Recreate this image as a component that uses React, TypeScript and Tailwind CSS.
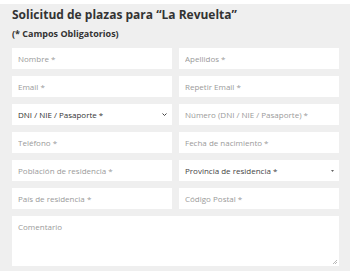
import React from "react";

const inputCls =
  "block h-[21px] w-full bg-white px-[6px] text-[8px] text-[#333] placeholder:text-[#9a9a9a] outline-none border-0";

function Field({ ph }: { ph: string }) {
  return <input className={inputCls} placeholder={ph} />;
}

export default function App() {
  return (
    <div className="w-[350px] h-[271px] bg-white pt-[4px] overflow-hidden" style={{ fontFamily: '"Open Sans", sans-serif' }}>
      <div className="bg-[#efefef] h-full pl-[12px] pr-[11px] pt-[3px]">
        <h1 className="text-[12px] leading-[16px] font-bold text-[#333]">
          Solicitud de plazas para “La Revuelta”
        </h1>
        <p className="mt-[5px] text-[9px] leading-[12px] font-bold text-[#333]">(* Campos Obligatorios)</p>
        <div className="mt-[8px] grid grid-cols-2 gap-x-[7px] gap-y-[7px]">
          <Field ph="Nombre *" />
          <Field ph="Apellidos *" />
          <Field ph="Email *" />
          <Field ph="Repetir Email *" />
          <div className="h-[21px] bg-white flex items-center justify-between pl-[6px] pr-[4px] text-[8px] text-[#333]">
            <span>DNI / NIE / Pasaporte *</span>
            <svg width="5" height="3" viewBox="0 0 5 3" className="mr-[1px]">
              <path d="M0.5 0.5 L2.5 2.5 L4.5 0.5" fill="none" stroke="#444" strokeWidth="1" />
            </svg>
          </div>
          <Field ph="Número (DNI / NIE / Pasaporte) *" />
          <Field ph="Teléfono *" />
          <Field ph="Fecha de nacimiento *" />
          <Field ph="Población de residencia *" />
          <div className="h-[21px] bg-white flex items-center justify-between pl-[6px] pr-[5px] text-[8px] text-[#444]">
            <span>Provincia de residencia *</span>
            <svg width="3" height="2" viewBox="0 0 3 2">
              <path d="M0 0 L3 0 L1.5 2 Z" fill="#666" />
            </svg>
          </div>
          <Field ph="País de residencia *" />
          <Field ph="Código Postal *" />
          <div className="col-span-2 relative">
            <textarea
              className="block h-[50px] w-full bg-white px-[6px] py-[5px] text-[8px] leading-[12px] text-[#333] placeholder:text-[#9a9a9a] outline-none border-0 resize-none"
              placeholder="Comentario"
            />
            <svg width="4" height="4" viewBox="0 0 4 4" className="absolute right-[2px] bottom-[2px]">
              <path d="M0 4 L4 0 M2 4 L4 2" stroke="#999" strokeWidth="0.7" />
            </svg>
          </div>
        </div>
      </div>
    </div>
  );
}
